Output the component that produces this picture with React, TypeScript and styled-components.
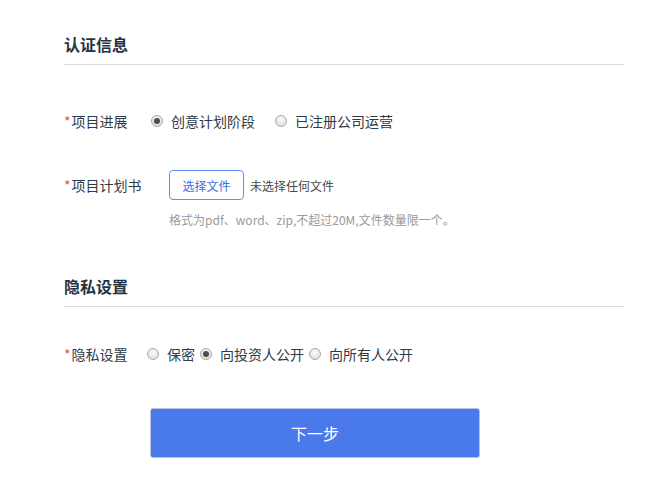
import React from 'react';
import styled, { createGlobalStyle } from 'styled-components';

const GlobalStyle = createGlobalStyle`
  html, body {
    margin: 0;
    padding: 0;
    background: #fff;
  }
  body {
    font-family: "Noto Sans CJK SC", "Liberation Sans", sans-serif;
    color: #333d4b;
  }
`;

const Page = styled.div`
  width: 560px;
  padding: 0 39px 40px 64px;
`;

const SectionTitle = styled.h2<{ $top: number }>`
  margin: ${({ $top }) => $top}px 0 0;
  padding-bottom: 9px;
  border-bottom: 1px solid #dcdcdc;
  font-size: 16px;
  line-height: 22px;
  font-weight: 700;
  color: #27323f;
`;

const Row = styled.div<{ $top: number }>`
  display: flex;
  align-items: center;
  min-height: 30px;
  margin-top: ${({ $top }) => $top}px;
  font-size: 14px;
`;

const Label = styled.div<{ $width: number }>`
  width: ${({ $width }) => $width}px;
  flex: none;
  color: #303a48;
  white-space: nowrap;

  &::before {
    content: '*';
    color: #e0545a;
    margin-right: 1px;
  }
`;

const RadioGroup = styled.div<{ $gap: number }>`
  display: flex;
  align-items: center;
  gap: ${({ $gap }) => $gap}px;
`;

const RadioItem = styled.label`
  display: flex;
  align-items: center;
  gap: 8px;
  color: #303a48;
`;

const RadioDot = styled.span<{ $checked?: boolean }>`
  width: 12px;
  height: 12px;
  box-sizing: border-box;
  border-radius: 50%;
  border: 1px solid #a9a9a9;
  background: radial-gradient(circle at 50% 35%, #fbfbfb 0%, #e2e2e2 70%, #d4d4d4 100%);
  position: relative;

  &::after {
    content: '';
    display: ${({ $checked }) => ($checked ? 'block' : 'none')};
    position: absolute;
    left: 2px;
    top: 2px;
    width: 6px;
    height: 6px;
    border-radius: 50%;
    background: #4d4d4d;
  }
`;

const FileColumn = styled.div`
  display: flex;
  flex-direction: column;
`;

const FileLine = styled.div`
  display: flex;
  align-items: center;
  gap: 6px;
  font-size: 12px;
  color: #4a4a4a;
`;

const FileButton = styled.button`
  height: 30px;
  width: 75px;
  box-sizing: border-box;
  border: 1px solid #5d8ef0;
  border-radius: 4px;
  background: #fff;
  color: #3d6fe3;
  font-family: inherit;
  font-size: 12px;
  padding: 0;
`;

const Hint = styled.div`
  margin-top: 12px;
  font-size: 12px;
  line-height: 16px;
  color: #9a9a9a;
`;

const NextButton = styled.button`
  display: block;
  margin: 39px 0 0 86px;
  width: 330px;
  height: 50px;
  box-sizing: border-box;
  border: 1px solid #b8c4dc;
  border-radius: 3px;
  background: #4a79ec;
  color: #fff;
  font-family: inherit;
  font-size: 16px;
`;

const Radio = ({ checked, text }: { checked?: boolean; text: string }) => (
  <RadioItem>
    <RadioDot $checked={checked} />
    {text}
  </RadioItem>
);

const App = () => (
  <>
    <GlobalStyle />
    <Page>
      <SectionTitle $top={33}>认证信息</SectionTitle>
      <Row $top={41}>
        <Label $width={87}>项目进展</Label>
        <RadioGroup $gap={20}>
          <Radio checked text="创意计划阶段" />
          <Radio text="已注册公司运营" />
        </RadioGroup>
      </Row>
      <Row $top={34} style={{ alignItems: 'flex-start' }}>
        <Label $width={105} style={{ lineHeight: '30px' }}>项目计划书</Label>
        <FileColumn>
          <FileLine>
            <FileButton>选择文件</FileButton>
            未选择任何文件
          </FileLine>
          <Hint>格式为pdf、word、zip,不超过20M,文件数量限一个。</Hint>
        </FileColumn>
      </Row>
      <SectionTitle $top={47}>隐私设置</SectionTitle>
      <Row $top={32}>
        <Label $width={83}>隐私设置</Label>
        <RadioGroup $gap={5}>
          <Radio text="保密" />
          <Radio checked text="向投资人公开" />
          <Radio text="向所有人公开" />
        </RadioGroup>
      </Row>
      <NextButton>下一步</NextButton>
    </Page>
  </>
);

export default App;
